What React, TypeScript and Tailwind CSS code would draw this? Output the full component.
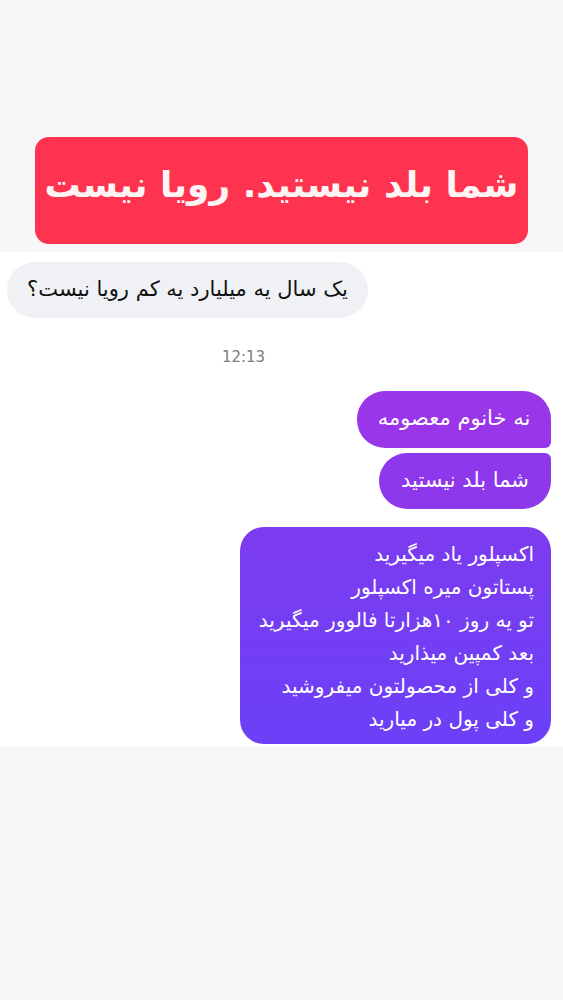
export default function App() {
  const lines = [
    "اکسپلور یاد میگیرید",
    "پستاتون میره اکسپلور",
    "تو یه روز ۱۰هزارتا فالوور میگیرید",
    "بعد کمپین میذارید",
    "و کلی از محصولتون میفروشید",
    "و کلی پول در میارید",
  ];

  return (
    <div
      className="w-[563px] h-[1000px] bg-[#f7f7fa] flex flex-col"
      style={{ fontFamily: '"DejaVu Sans", "Noto Sans", sans-serif' }}
    >
      <div className="h-[252px] flex items-end justify-center pb-[8px]">
        <div
          dir="rtl"
          className="w-[493px] h-[107px] rounded-[14px] bg-[#fe334f] flex items-center justify-center pb-[12px] text-[#fff4f4] text-[36px] font-bold whitespace-nowrap"
        >
          شما بلد نیستید. رویا نیست
        </div>
      </div>

      <div className="h-[495px] bg-white flex flex-col px-[12px] pt-[10px]">
        <div className="flex justify-start -ml-[5px]">
          <div
            dir="rtl"
            className="w-[361px] h-[56px] px-[18px] rounded-full bg-[#f0f1f4] flex items-center justify-center text-[21px] text-[#111] whitespace-nowrap"
          >
            یک سال یه میلیارد یه کم رویا نیست؟
          </div>
        </div>

        <div className="mt-[28px] text-center text-[15px] text-[#7b7b80] -ml-[76px]">
          12:13
        </div>

        <div className="mt-[22px] flex flex-col items-end gap-[5px]">
          <div
            dir="rtl"
            className="w-[194px] h-[57px] rounded-l-[28px] rounded-tr-[28px] rounded-br-[6px] bg-[#9a36e9] text-white text-[21px] flex items-center justify-center whitespace-nowrap"
          >
            نه خانوم معصومه
          </div>
          <div
            dir="rtl"
            className="w-[172px] h-[56px] rounded-l-[28px] rounded-br-[28px] rounded-tr-[6px] bg-[#8d38eb] text-white text-[21px] flex items-center justify-center whitespace-nowrap"
          >
            شما بلد نیستید
          </div>
          <div
            dir="rtl"
            className="mt-[13px] w-[311px] rounded-[24px] bg-gradient-to-b from-[#7c3bef] to-[#6b40f7] text-white text-[20px] leading-[33px] px-[17px] pt-[11px] pb-[8px] whitespace-nowrap"
          >
            {lines.map((l) => (
              <div key={l}>{l}</div>
            ))}
          </div>
        </div>
      </div>

      <div className="flex-1 bg-[#f7f7fa]" />
    </div>
  );
}
